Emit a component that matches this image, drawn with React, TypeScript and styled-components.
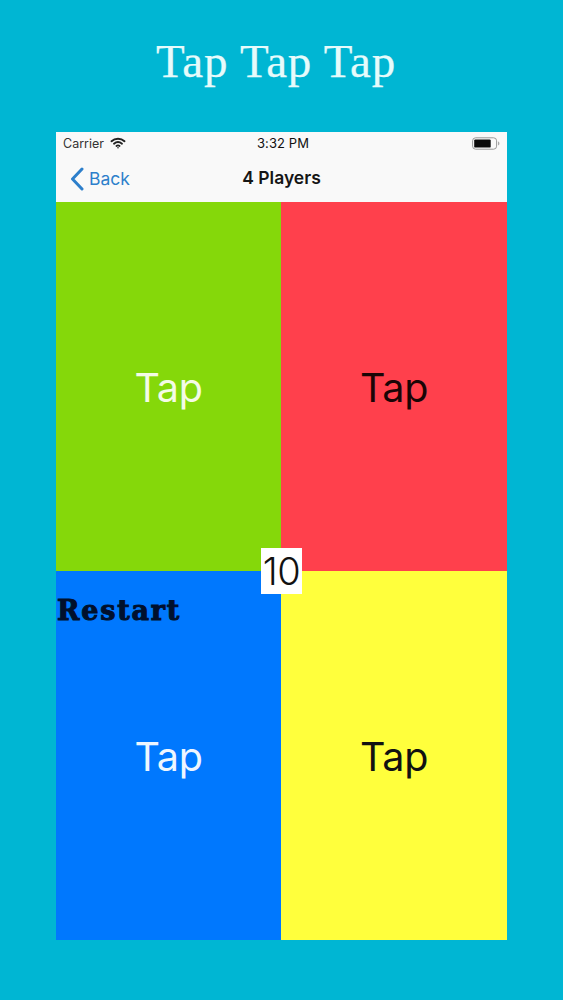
import React from "react";
import styled, { createGlobalStyle } from "styled-components";

const GlobalStyle = createGlobalStyle`
  html, body {
    margin: 0;
    padding: 0;
    background: #00b6d3;
  }
`;

const Page = styled.div`
  width: 563px;
  height: 1000px;
  background: #00b6d3;
  display: flex;
  flex-direction: column;
  align-items: center;
  overflow: hidden;
`;

const Headline = styled.h1`
  margin: 0 11px 0 0;
  height: 132px;
  padding-top: 35px;
  box-sizing: border-box;
  font-family: "Liberation Serif", serif;
  font-weight: 400;
  font-size: 47px;
  line-height: 52px;
  letter-spacing: 0.8px;
  -webkit-text-stroke: 0.25px #e6fbfb;
  color: #e6fbfb;
`;

const Phone = styled.div`
  width: 451px;
  height: 808px;
  display: flex;
  flex-direction: column;
`;

const Header = styled.div`
  height: 70px;
  background: #f9f9f9;
  display: flex;
  flex-direction: column;
  font-family: "Inter", "Liberation Sans", sans-serif;
  color: #111;
`;

const StatusBar = styled.div`
  height: 23px;
  padding: 0 7px;
  display: grid;
  grid-template-columns: 1fr auto 1fr;
  align-items: center;
  font-size: 12.5px;
`;

const Carrier = styled.div`
  display: flex;
  align-items: center;
  gap: 6px;
  color: #333;
  margin-top: -1px;
`;

const Clock = styled.div`
  font-weight: 400;
  font-size: 13px;
  margin-left: 3px;
  margin-top: -1px;
  letter-spacing: 0.1px;
`;

const BatteryWrap = styled.div`
  display: flex;
  justify-content: flex-end;
`;

const NavBar = styled.div`
  flex: 1;
  display: grid;
  grid-template-columns: 1fr auto 1fr;
  align-items: center;
  padding: 0 14px;
`;

const BackLink = styled.div`
  display: flex;
  align-items: center;
  gap: 5px;
  font-size: 17.5px;
  color: #2d7fcb;
`;

const NavTitle = styled.div`
  font-size: 17.5px;
  font-weight: 600;
  color: #151515;
  margin-top: -2px;
`;

const Board = styled.div`
  position: relative;
  flex: 1;
  display: grid;
  grid-template-columns: 225px 226px;
  grid-template-rows: 369px 369px;
`;

const Pad = styled.div<{ $bg: string; $fg: string }>`
  background: ${(p) => p.$bg};
  color: ${(p) => p.$fg};
  display: flex;
  align-items: center;
  justify-content: center;
  padding-top: 2px;
  font-family: "Inter", "Liberation Sans", sans-serif;
  font-size: 39.5px;
  font-weight: 400;
  letter-spacing: -0.3px;
`;

const Score = styled.div`
  position: absolute;
  left: 205px;
  top: 346px;
  width: 41px;
  height: 46px;
  background: #fff;
  color: #111;
  display: flex;
  align-items: center;
  justify-content: center;
  font-family: "Inter", "Liberation Sans", sans-serif;
  font-size: 38px;
  font-weight: 350;
  letter-spacing: -0.5px;
`;

const RestartLabel = styled.div`
  position: absolute;
  left: 1px;
  top: 392px;
  font-family: "DejaVu Serif", "Liberation Serif", serif;
  font-weight: 700;
  font-size: 27px;
  line-height: 34px;
  letter-spacing: 1.8px;
  -webkit-text-stroke: 1px #00102c;
  color: #00102c;
`;

const WifiIcon = () => (
  <svg width="16" height="12" viewBox="0 0 16 12" fill="none" stroke="#222" strokeLinecap="round">
    <path d="M1.5 4.2C5.2 .9 10.8 .9 14.5 4.2" strokeWidth="2" />
    <path d="M4 6.7c2.4-2 5.6-2 8 0" strokeWidth="1.9" />
    <path d="M6.4 9c1-.7 2.2-.7 3.2 0" strokeWidth="1.7" />
    <circle cx="8" cy="10.7" r="0.8" fill="#222" stroke="none" />
  </svg>
);

const BatteryIcon = () => (
  <svg width="28" height="13" viewBox="0 0 28 13">
    <rect x="0.6" y="0.8" width="24" height="11.4" rx="3" fill="none" stroke="#999" strokeWidth="1" />
    <rect x="2.2" y="2.4" width="16.5" height="8.2" rx="1.2" fill="#0a0a0a" />
    <path d="M26 4.6c1 .3 1.4 1 1.4 1.9s-.4 1.6-1.4 1.9z" fill="#aaa" />
  </svg>
);

const BackChevron = () => (
  <svg width="14" height="24" viewBox="0 0 14 24" fill="none" stroke="#2d7fcb" strokeWidth="3" strokeLinecap="round" strokeLinejoin="round">
    <path d="M12 2 2.5 12 12 22" />
  </svg>
);

const pads = [
  { bg: "#85d80a", fg: "#f4fbe6" },
  { bg: "#ff404c", fg: "#1a0506" },
  { bg: "#0078fe", fg: "#eef6ff" },
  { bg: "#ffff3c", fg: "#111" },
];

const App: React.FC = () => {
  return (
    <Page>
      <GlobalStyle />
      <Headline>Tap Tap Tap</Headline>
      <Phone>
        <Header>
          <StatusBar>
            <Carrier>
              Carrier <WifiIcon />
            </Carrier>
            <Clock>3:32 PM</Clock>
            <BatteryWrap>
              <BatteryIcon />
            </BatteryWrap>
          </StatusBar>
          <NavBar>
            <BackLink>
              <BackChevron />
              Back
            </BackLink>
            <NavTitle>4 Players</NavTitle>
          </NavBar>
        </Header>
        <Board>
          {pads.map((pad, i) => (
            <Pad key={i} $bg={pad.bg} $fg={pad.fg}>
              Tap
            </Pad>
          ))}
          <Score>10</Score>
          <RestartLabel>Restart</RestartLabel>
        </Board>
      </Phone>
    </Page>
  );
};

export default App;
